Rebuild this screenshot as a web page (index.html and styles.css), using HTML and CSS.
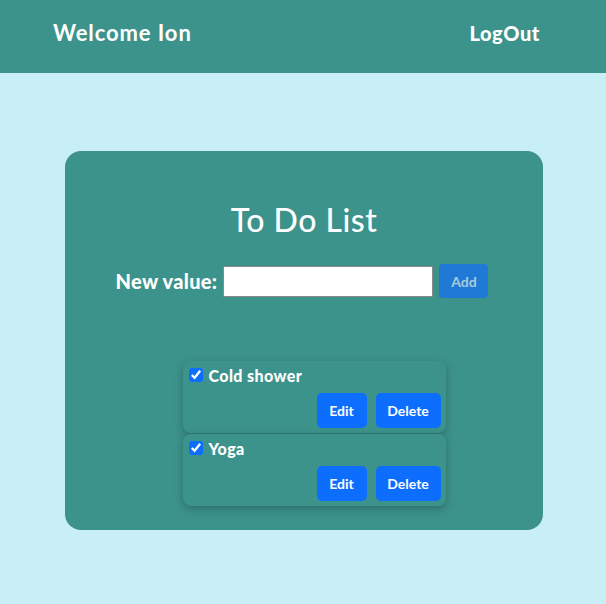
FILE: index.html
```html
<!DOCTYPE html>
<html>
<head>
<meta charset="utf-8">
<link rel="stylesheet" href="styles.css">
</head>
<body>
<header class="topbar">
  <span class="welcome">Welcome Ion</span>
  <span class="logout">LogOut</span>
</header>
<main class="page">
  <section class="card">
    <h1 class="title">To Do List</h1>
    <div class="add-row">
      <label class="add-label">New value:</label>
      <input class="add-input" type="text">
      <button class="add-btn">Add</button>
    </div>
    <ul class="list">
      <li class="item">
        <div class="item-head"><input type="checkbox" class="check" checked><span class="item-text">Cold shower</span></div>
        <div class="item-actions"><button class="btn btn-edit">Edit</button><button class="btn btn-del">Delete</button></div>
      </li>
      <li class="item">
        <div class="item-head"><input type="checkbox" class="check" checked><span class="item-text">Yoga</span></div>
        <div class="item-actions"><button class="btn btn-edit">Edit</button><button class="btn btn-del">Delete</button></div>
      </li>
    </ul>
  </section>
</main>
</body>
</html>
```
FILE: styles.css
```css
* { box-sizing: border-box; }
html, body { margin: 0; padding: 0; }
body {
  background: #c8eef6;
  font-family: "Lato", "Open Sans", sans-serif;
  color: #fff;
  height: 604px;
  overflow: hidden;
}
.topbar {
  height: 73px;
  background: #3c938b;
  display: flex;
  align-items: center;
  justify-content: space-between;
  padding: 0 66px 8px 53px;
}
.welcome { font-size: 22px; font-weight: 700; letter-spacing: 0.9px; }
.logout { font-size: 20px; font-weight: 900; letter-spacing: 0.6px; }
.page {
  display: flex;
  justify-content: center;
  padding-top: 78px;
  padding-left: 2px;
}
.card {
  width: 478px;
  height: 379px;
  background: #3c938b;
  border-radius: 16px;
  display: flex;
  flex-direction: column;
  align-items: center;
  padding-top: 50px;
}
.title {
  margin: 0;
  font-size: 32px;
  font-weight: 500;
  line-height: 38px;
  letter-spacing: 0.5px;
}
.add-row {
  display: flex;
  align-items: center;
  margin-top: 25px;
  margin-left: -4px;
}
.add-label { font-size: 20px; font-weight: 900; margin-right: 6px; letter-spacing: 0.3px; }
.add-input {
  width: 210px;
  height: 31px;
  border: 1px solid #8a8a8a;
  background: #fff;
  margin: 0 6px 0 0;
}
.add-btn {
  width: 49px;
  height: 34px;
  background: #2079d6;
  color: #a9cbd9;
  border: none;
  border-radius: 4px;
  font-family: inherit;
  font-weight: 700;
  font-size: 14px;
}
.list {
  list-style: none;
  margin: 63px 0 0 20px;
  padding: 0;
  width: 263px;
  display: flex;
  flex-direction: column;
  gap: 1px;
}
.item {
  height: 72px;
  border-radius: 8px;
  background: #3c938b;
  box-shadow: 0 3px 8px rgba(0,0,0,0.25);
  padding: 4px 4px 0 6px;
}
.item-head { display: flex; align-items: center; height: 20px; }
.check {
  width: 14px; height: 14px;
  margin: 0 6px 0 0;
  accent-color: #0d6efd;
}
.item-text { font-size: 16px; font-weight: 900; letter-spacing: 0.4px; }
.item-actions {
  display: flex;
  justify-content: flex-end;
  gap: 9px;
  margin-top: 8px;
  padding-right: 1px;
}
.btn {
  height: 35px;
  border: none;
  border-radius: 5px;
  background: #0d6efd;
  color: #fff;
  font-family: inherit;
  font-weight: 700;
  font-size: 14px;
}
.btn-edit { width: 50px; }
.btn-del { width: 65px; }
```
